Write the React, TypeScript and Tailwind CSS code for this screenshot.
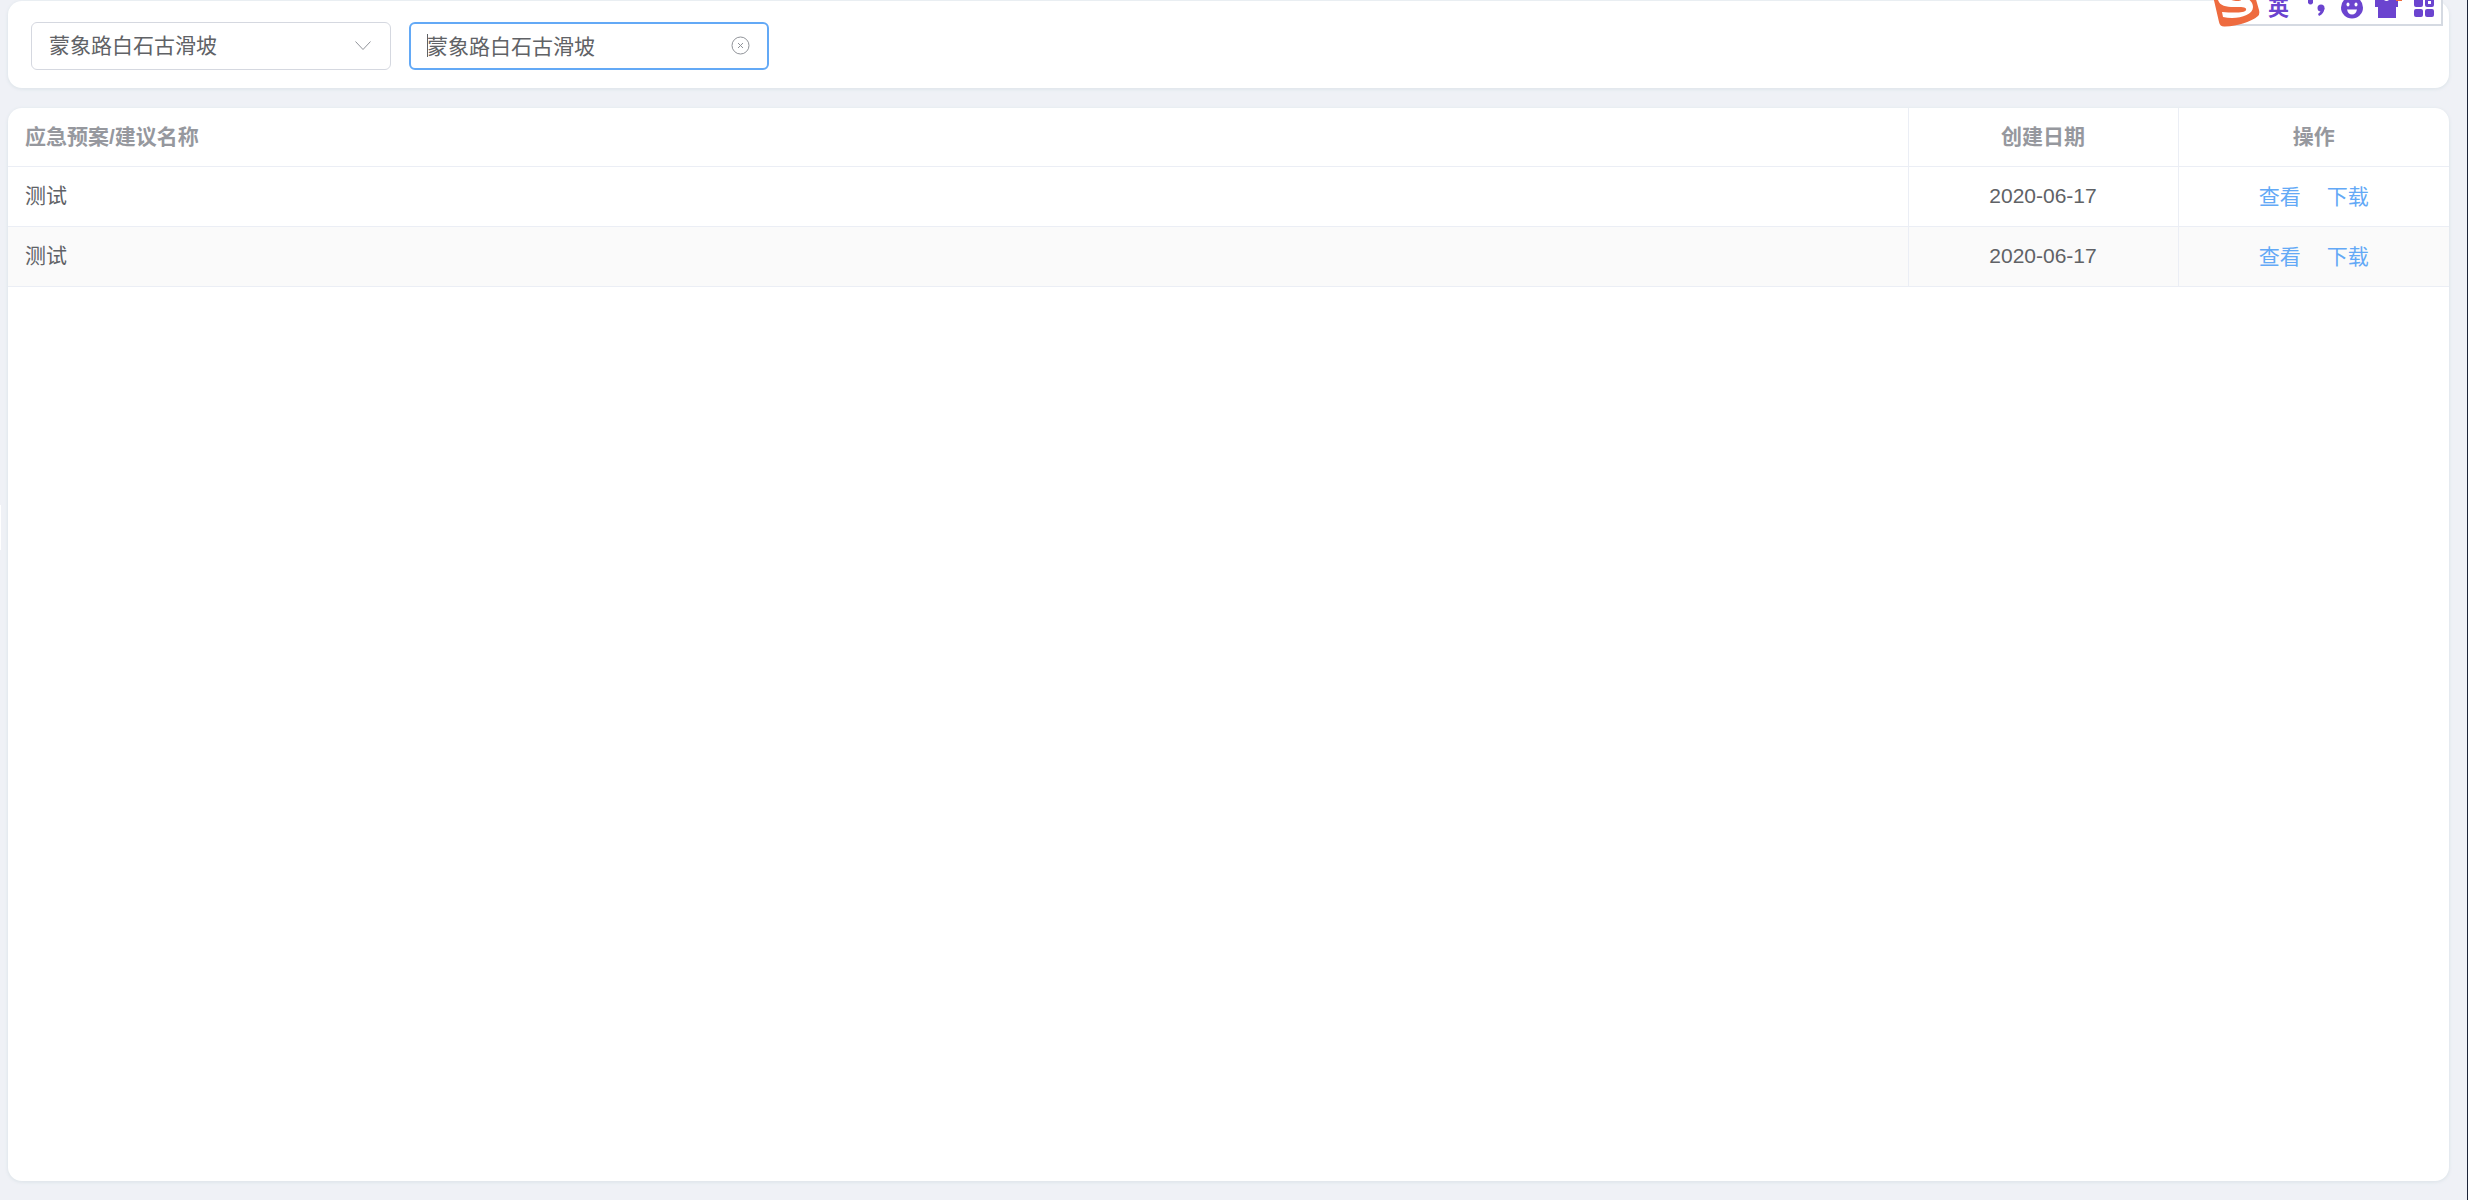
import { useState } from "react";

const plans = [
  { id: 1, name: "测试", date: "2020-06-17" },
  { id: 2, name: "测试", date: "2020-06-17" },
];

const slopes = ["蒙象路白石古滑坡"];

// floating language bar of the input method
const InputMethodBar = () => {
  return (
    <div className="absolute top-0 right-6 h-7 w-[232px]">
      <div className="absolute top-0 right-0 h-[26px] w-[212px] border-r-2 border-b-2 border-[#d5dae2] bg-white" />
      <svg
        className="absolute inset-0"
        width="232"
        height="28"
        viewBox="0 0 232 28"
        fill="none"
      >
        <path
          d="M2 -4 L8 22 Q9 27 14 26.500 C27 26 40 22 47 16 Q49 14 48 10 L44 -4 Z"
          fill="#ee6b3f"
        />
        <path
          d="M7 0 C9 6 15 7 23 7 C31 7 36 7 35 10 C34 13 23 13 11 12 L12 17 C25 20 42 16 42 7 C42 3 39 0 36 -2 L31 -2 C32 1 25 3 16 -2 L7 -3 Z"
          fill="#ffffff"
        />
        <path d="M97 0h5v3q-2.500 3-5 0z" fill="#6b44cf" />
        <circle cx="110" cy="8" r="3.500" fill="#6b44cf" />
        <path d="M113.500 8 Q113 14 108 16 L107 14 Q110 12 110 9 Z" fill="#6b44cf" />
        <circle cx="141" cy="7.500" r="11" fill="#6b44cf" />
        <ellipse cx="137" cy="4.500" rx="1.500" ry="2" fill="#ffffff" />
        <ellipse cx="145" cy="4.500" rx="1.500" ry="2" fill="#ffffff" />
        <path d="M136 9.500h10q-1 5-5 5t-5-5z" fill="#ffffff" />
        <path d="M164 -2h23v9h-2v11h-18v-11h-3z" fill="#6b44cf" />
        <path d="M173 0h5q-2.500 2-5 0z" fill="#ffffff" />
        <path d="M185 -2h6v3h-6z" fill="#ee6b3f" />
        <rect x="203" y="-3" width="9" height="10" rx="2" fill="#6b44cf" />
        <rect x="214" y="-3" width="9" height="10" rx="2" fill="#6b44cf" />
        <rect x="217" y="1" width="3" height="3" fill="#ffffff" />
        <rect x="203" y="9" width="9" height="8" rx="2" fill="#6b44cf" />
        <rect x="214" y="9" width="9" height="8" rx="2" fill="#6b44cf" />
      </svg>
      <span className="absolute -top-1 left-[57px] text-[21px] leading-6 font-bold text-[#6b44cf]">
        英
      </span>
    </div>
  );
};

const App = () => {
  const [slope, setSlope] = useState(slopes[0]);
  const [keyword, setKeyword] = useState("蒙象路白石古滑坡");

  return (
    <div className="relative flex min-h-screen flex-col gap-5 border-r border-[#1c2438] bg-[#eff1f6] pt-px pr-[18px] pb-[19px] pl-2 font-['Liberation_Sans','Noto_Sans_CJK_SC',sans-serif] text-[21px] text-[#606266]">
      <div className="absolute top-[505px] left-0 h-[45px] w-px bg-white" />

      <form
        className="flex gap-[18px] rounded-[14px] bg-white px-[23px] pt-[21px] pb-[18px] shadow-[0_1px_3px_1px_#e1e7ec]"
        onSubmit={(e) => e.preventDefault()}
      >
        <div className="relative">
          <select
            aria-label="滑坡"
            className="h-12 w-[360px] appearance-none rounded-md border border-[#d5d8e0] bg-white px-[17px] outline-none"
            value={slope}
            onChange={(e) => setSlope(e.target.value)}
          >
            {slopes.map((name) => (
              <option key={name}>{name}</option>
            ))}
          </select>
          <svg
            className="pointer-events-none absolute top-[19px] right-5"
            width="16"
            height="10"
            viewBox="0 0 16 10"
            fill="none"
            stroke="#909399"
          >
            <path d="M0.500 0.500L8 8.500L15.500 0.500" />
          </svg>
        </div>

        <div className="relative">
          <input
            type="text"
            aria-label="名称"
            className="h-12 w-[360px] rounded-md border-2 border-[#63a9f6] bg-white px-4 pb-0.5 outline-none"
            value={keyword}
            onChange={(e) => setKeyword(e.target.value)}
          />
          <span className="absolute top-3 left-[18px] h-[23px] w-px bg-[#606266]" />
          <button
            type="button"
            aria-label="清空"
            className="absolute top-[14px] right-[19px]"
            onClick={() => setKeyword("")}
          >
            <svg
              width="19"
              height="19"
              viewBox="0 0 19 19"
              fill="none"
              stroke="#909399"
            >
              <circle cx="9.500" cy="9.500" r="8.500" />
              <path d="M7 7l5 5M12 7l-5 5" />
            </svg>
          </button>
        </div>
      </form>

      <div className="flex-1 overflow-hidden rounded-[14px] bg-white shadow-[0_1px_3px_1px_#e1e7ec]">
        <table className="w-full table-fixed border-collapse">
          <thead>
            <tr className="h-[58px] border-b border-[#ebeef5] text-[#96989e]">
              <th className="px-[17px] text-left font-bold">应急预案/建议名称</th>
              <th className="w-[270px] border-l border-[#ebeef5] text-center font-bold">
                创建日期
              </th>
              <th className="w-[271px] border-l border-[#ebeef5] text-center font-bold">
                操作
              </th>
            </tr>
          </thead>
          <tbody>
            {plans.map((plan) => (
              <tr
                key={plan.id}
                className="h-[60px] border-b border-[#ebeef5] even:bg-[#fafafa]"
              >
                <td className="px-[17px]">{plan.name}</td>
                <td className="border-l border-[#ebeef5] text-center">
                  {plan.date}
                </td>
                <td className="border-l border-[#ebeef5]">
                  <div className="flex justify-center gap-[26px] pt-0.5 text-[#63a9f6]">
                    <a href="#view">查看</a>
                    <a href="#download">下载</a>
                  </div>
                </td>
              </tr>
            ))}
          </tbody>
        </table>
      </div>

      <InputMethodBar />
    </div>
  );
};

export default App;
